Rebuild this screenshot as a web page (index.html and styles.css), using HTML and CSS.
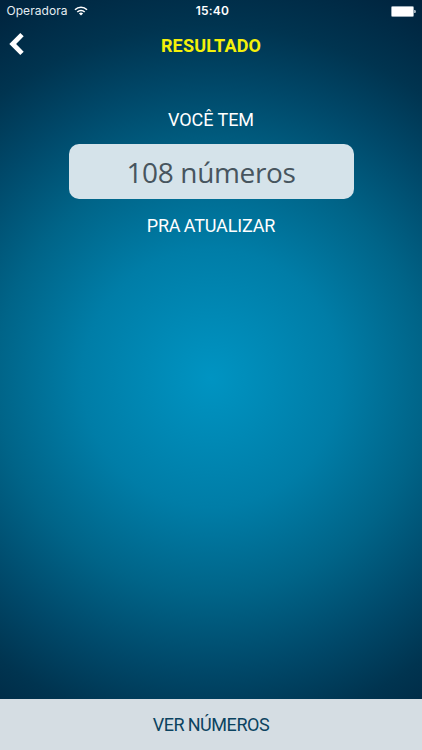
FILE: index.html
```html
<!DOCTYPE html>
<html lang="pt-BR">
<head>
<meta charset="utf-8">
<meta name="viewport" content="width=device-width, initial-scale=1">
<title>Resultado</title>
<link rel="stylesheet" href="styles.css">
</head>
<body>
<div class="screen">
  <div class="status">
    <div class="carrier">
      <span>Operadora</span>
      <svg class="wifi" width="14" height="10" viewBox="0 0 14 10" fill="none" stroke="#fff" stroke-width="1.6">
        <path d="M1 3.7a8.6 8.6 0 0 1 12 0M3.3 6a5.3 5.3 0 0 1 7.4 0"/>
        <path d="M7 9.6L4.9 7.5a3 3 0 0 1 4.2 0z" fill="#fff" stroke="none"/>
      </svg>
    </div>
    <span class="time">15:40</span>
    <svg class="battery" width="25" height="11" viewBox="0 0 25 11">
      <rect x=".5" y=".5" width="22" height="10" rx="1" fill="#fff" stroke="#9aabb7"/>
      <path d="M23.2 4h.8q.8 0 .8 1.5t-.8 1.5h-.8z" fill="#c5d0d8"/>
    </svg>
  </div>
  <header class="nav">
    <svg class="back" width="16" height="24" viewBox="0 0 16 24" fill="none" stroke="#fff" stroke-width="4.8">
      <path d="M13 2.6L3.7 12l9.3 9.4"/>
    </svg>
    <h1 class="title">RESULTADO</h1>
  </header>
  <main class="content">
    <p class="label label-top">VOCÊ TEM</p>
    <div class="count">108 números</div>
    <p class="label label-bottom">PRA ATUALIZAR</p>
  </main>
  <button class="action"><span>VER NÚMEROS</span></button>
</div>
</body>
</html>
```
FILE: styles.css
```css
* { box-sizing: border-box; }
body { margin: 0; }
.screen {
  display: flex;
  flex-direction: column;
  width: 422px;
  height: 750px;
  overflow: hidden;
  color: #fff;
  font-family: Roboto, "Liberation Sans", sans-serif;
  background: radial-gradient(circle 430px at 211px 378px, #0094c2 0%, #007da7 30%, #006488 50%, #004869 68%, #003450 82%, #00233d 100%);
}
.status {
  display: grid;
  grid-template-columns: 1fr auto 1fr;
  align-items: center;
  height: 22px;
  padding: 0 6.5px 0 6.5px;
  font: 12px/22px Inter, sans-serif;
}
.carrier { display: flex; align-items: center; gap: 6px; color: #e4edf2; letter-spacing: .05px; }
.wifi { margin-top: -1px; }
.time { font-weight: 600; letter-spacing: .2px; padding-left: 3px; }
.battery { justify-self: end; }
.nav {
  display: grid;
  grid-template-columns: 16px 1fr 16px;
  align-items: center;
  height: 46px;
  padding: 0 9px;
}
.back { margin-top: -3px; }
.title { margin: 0; padding-top: 1px; text-align: center; color: #f4f00a; font-size: 18px; line-height: 46px; font-weight: 700; letter-spacing: .15px; }
.content { flex: 1; display: flex; flex-direction: column; align-items: center; padding-top: 38px; }
.label { margin: 0; font-size: 18px; line-height: 28px; }
.label-top { letter-spacing: -.05px; }
.label-bottom { letter-spacing: -.15px; word-spacing: -1px; }
.count {
  width: 285px;
  height: 55px;
  margin: 9.5px 0 13px;
  border-radius: 10px;
  background: #d5e3ea;
  color: #47555e;
  text-align: center;
  font: 28px/57px "Open Sans", "Noto Sans", sans-serif;
  letter-spacing: -.35px;
}
.action {
  height: 51px;
  padding: 0;
  border: 0;
  background: #d5dde3;
  color: #0b4360;
  font: 18px/51px Roboto, "Liberation Sans", sans-serif;
  letter-spacing: -.45px;
  word-spacing: -.5px;
}
```
